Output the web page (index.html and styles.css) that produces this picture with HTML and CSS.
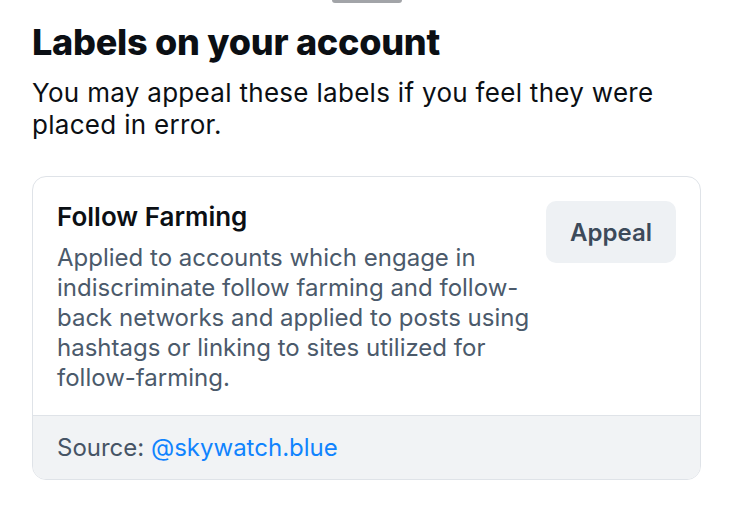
FILE: index.html
```html
<!DOCTYPE html>
<html lang="en">

<head>
    <meta charset="utf8">
    <title>Labels on your account</title>
    <link rel="stylesheet" href="styles.css">
</head>

<body>
    <div class="sheet">
        <div class="handle"></div>
        <h1 class="title">Labels on your account</h1>
        <p class="intro">You may appeal these labels if you feel they were placed in error.</p>

        <div class="label-card">
            <div class="label-body">
                <div class="label-text">
                    <h2 class="label-name">Follow Farming</h2>
                    <p class="label-desc">Applied to accounts which engage in indiscriminate follow farming and follow-back networks and applied to posts using hashtags or linking to sites utilized for follow-farming.</p>
                </div>
                <button class="appeal">Appeal</button>
            </div>
            <div class="label-source">
                Source: <a href="#">@skywatch.blue</a>
            </div>
        </div>
    </div>
</body>

</html>
```

FILE: styles.css
```css
* {
    box-sizing: border-box;
    margin: 0;
    padding: 0;
}

body {
    background-color: #ffffff;
    font-family: Inter, "Noto Sans", sans-serif;
    color: #0b0f14;
}

.sheet {
    display: flex;
    flex-direction: column;
    padding: 0 32px;
}

.handle {
    align-self: center;
    width: 70px;
    height: 3px;
    background-color: #a2a4a8;
    border-radius: 0 0 3px 3px;
    margin-bottom: 18px;
}

.title {
    font-size: 36px;
    font-weight: 800;
    line-height: 42px;
    letter-spacing: -0.25px;
}

.intro {
    font-size: 26px;
    line-height: 32px;
    margin-top: 14px;
    letter-spacing: 0.3px;
}

.label-card {
    margin-top: 35px;
    border: 1px solid #dfe3e8;
    border-radius: 14px;
    overflow: hidden;
}

.label-body {
    display: flex;
    gap: 12px;
    padding: 24px 24px 22px;
}

.label-text {
    flex: 1;
}

.label-name {
    font-size: 26px;
    font-weight: 600;
    line-height: 32px;
}

.label-desc {
    font-size: 24px;
    line-height: 30px;
    color: #4b5a6b;
    margin-top: 10px;
}

.appeal {
    width: 130px;
    height: 62px;
    border: 0 none;
    border-radius: 10px;
    background-color: #eef1f4;
    color: #3c4a5a;
    font-family: inherit;
    font-size: 24px;
    font-weight: 600;
    cursor: pointer;
}

.label-source {
    background-color: #f1f3f5;
    border-top: 1px solid #dfe3e8;
    padding: 17px 24px 16px;
    font-size: 24px;
    line-height: 30px;
    color: #465465;
}

.label-source a {
    color: #1083fe;
    text-decoration: none;
}
```
